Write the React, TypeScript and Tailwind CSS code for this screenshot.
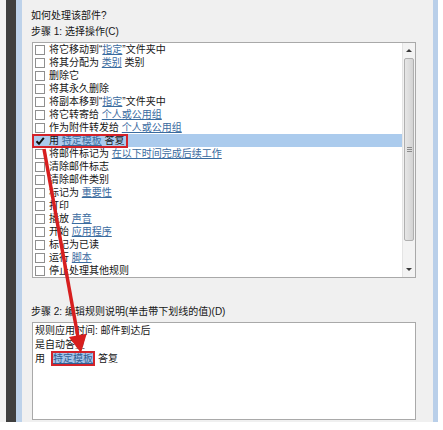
import React from "react";

type Seg = { t: string; link?: boolean };

// "@" prefix marks an underlined value
function row(...parts: string[]): Seg[] {
  return parts.map((p) => (p.startsWith("@") ? { t: p.slice(1), link: true } : { t: p }));
}

const actions: Seg[][] = [
  row("将它移动到\u201c", "@指定", "\u201d文件夹中"),
  row("将其分配为 ", "@类别", " 类别"),
  row("删除它"),
  row("将其永久删除"),
  row("将副本移到\u201c", "@指定", "\u201d文件夹中"),
  row("将它转寄给 ", "@个人或公用组"),
  row("作为附件转发给 ", "@个人或公用组"),
  row("用 ", "@特定模板", " 答复"),
  row("将邮件标记为 ", "@在以下时间完成后续工作"),
  row("清除邮件标志"),
  row("清除邮件类别"),
  row("标记为 ", "@重要性"),
  row("打印"),
  row("播放 ", "@声音"),
  row("开始 ", "@应用程序"),
  row("标记为已读"),
  row("运行 ", "@脚本"),
  row("停止处理其他规则"),
];

function Checkbox({ checked }: { checked?: boolean }) {
  if (checked) {
    return (
      <svg width="10" height="10" viewBox="0 0 10 10" className="shrink-0">
        <path d="M1.5 5.2 L4 7.8 L8.8 1.8" fill="none" stroke="#111" strokeWidth="2" />
      </svg>
    );
  }
  return <span className="w-[10px] h-[10px] shrink-0 border border-[#8f8f8f] bg-white" />;
}

function Segs({ segs }: { segs: Seg[] }) {
  return (
    <span className="whitespace-pre">
      {segs.map((s, i) =>
        s.link ? (
          <span key={i} className="text-[#3a6b9f] underline underline-offset-[1px]">
            {s.t}
          </span>
        ) : (
          <span key={i}>{s.t}</span>
        )
      )}
    </span>
  );
}

function Scrollbar() {
  return (
    <div className="w-[13px] flex flex-col bg-[#f3f3f3] border-l border-[#e4e4e4]">
      <div className="h-[14px] flex items-center justify-center">
        <span className="w-0 h-0 border-x-[3px] border-x-transparent border-b-[3px] border-b-[#3a3a3a]" />
      </div>
      <div className="flex-1 pt-[1px]">
        <div className="mx-[1px] h-[183px] rounded-[2px] border border-[#b0b0b0] bg-gradient-to-r from-[#e6e6e6] to-[#d4d4d4] flex flex-col items-center justify-center gap-[1px]">
          <span className="w-[5px] h-px bg-[#8c8c8c]" />
          <span className="w-[5px] h-px bg-[#8c8c8c]" />
          <span className="w-[5px] h-px bg-[#8c8c8c]" />
        </div>
      </div>
      <div className="h-[15px] flex items-center justify-center">
        <span className="w-0 h-0 border-x-[3px] border-x-transparent border-t-[3px] border-t-[#3a3a3a]" />
      </div>
    </div>
  );
}

export default function App() {
  return (
    <div
      className="relative w-[443px] h-[430px] bg-white flex items-start text-[10px] text-[#161616]"
      style={{ fontFamily: '"Liberation Sans", "Noto Sans CJK SC", sans-serif' }}
    >
      <div className="w-[6px] h-[422px] bg-[#f2f2f2]" />
      <div className="w-[10px] h-[422px] bg-[#3f3f3f]" />
      <div className="w-[6px] h-[422px] bg-[#bdd2ea]" />

      <div className="w-[411px] h-[422px] bg-[#f0f0f0] pl-[10px] pr-[17px] pt-[8px] flex flex-col">
        <div className="h-[16px] leading-[16px] -ml-px">如何处理该部件?</div>
        <div className="h-[16px] leading-[16px] -ml-px">步骤 1: 选择操作(C)</div>

        <div className="mt-[2px] h-[236px] border border-[#a9a9a9] bg-white flex">
          <div className="flex-1 flex flex-col">
            {actions.map((segs, i) => {
              const selected = i === 7;
              return (
                <div
                  key={i}
                  className={
                    "relative h-[13px] flex items-center gap-[4px] pl-[2px] leading-[13px] " +
                    (selected ? "bg-[#abcbed]" : "")
                  }
                >
                  <Checkbox checked={selected} />
                  <Segs segs={segs} />
                  {selected && (
                    <span className="absolute -left-px top-0 w-[96px] h-[14px] border-2 border-[#d3232a]" />
                  )}
                </div>
              );
            })}
          </div>
          <Scrollbar />
        </div>

        <div className="mt-[26px] h-[16px] leading-[16px] -ml-px">步骤 2: 编辑规则说明(单击带下划线的值)(D)</div>
        <div className="mt-[2px] h-[98px] border border-[#a9a9a9] bg-white px-[2px] pt-px flex flex-col">
          <div className="h-[14px] leading-[14px]">规则应用时间: 邮件到达后</div>
          <div className="h-[14px] leading-[14px]">是自动答复</div>
          <div className="h-[14px] leading-[14px] flex items-center">
            <span>用</span>
            <span className="relative ml-[8px] bg-[#a6c4e8] text-[#2f5f94] underline">
              特定模板
              <span className="absolute -left-[2px] -top-[1px] w-[44px] h-[15px] border-2 border-[#d3232a]" />
            </span>
            <span className="ml-[5px]">答复</span>
          </div>
        </div>
      </div>

      <div className="w-[5px] h-[422px] bg-[#b9cfe9]" />

      <svg className="absolute inset-0 pointer-events-none" width="443" height="430" viewBox="0 0 443 430">
        <line x1="44" y1="149" x2="77.8" y2="336" stroke="#d71f1f" strokeWidth="3.5" />
        <polygon points="81,353 68.9,336.9 86.7,333.7" fill="#d71f1f" />
      </svg>
    </div>
  );
}
